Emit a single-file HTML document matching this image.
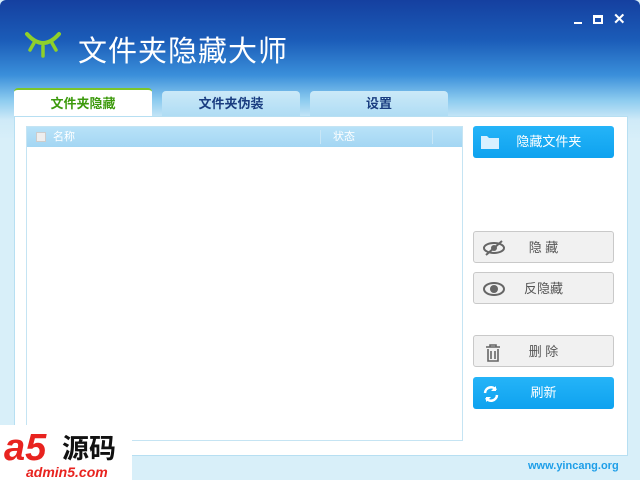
<!DOCTYPE html>
<html><head><meta charset="utf-8"><style>
*{margin:0;padding:0;box-sizing:border-box}
body{width:640px;height:480px;overflow:hidden;font-family:"Liberation Sans","Noto Sans CJK SC",sans-serif;background:#d8eff9;position:relative}
.win{position:absolute;left:0;top:0;width:640px;height:480px;border-radius:6px 6px 0 0;background:linear-gradient(180deg,#1540a0 0px,#1b5cb8 40px,#3a8fda 75px,#8ccbef 100px,#cfeaf8 120px,#d8eff9 140px);}
.title{position:absolute;left:78px;top:28px;color:#fff;font-size:29px;letter-spacing:1px;font-family:"Noto Sans CJK SC",sans-serif;}
.tab{position:absolute;height:26px;font-size:13px;font-weight:bold;text-align:center;line-height:26px;border-radius:4px 4px 0 0;color:#1a3d80}
.panel{position:absolute;left:14px;top:116px;width:614px;height:340px;background:#fff;border:1px solid #b7dff2}
.list{position:absolute;left:26px;top:126px;width:437px;height:315px;border:1px solid #c5e4f3;background:#fff}
.hdr{height:20px;background:linear-gradient(#b8e2f8,#a3d6f3);color:#fff;font-size:11px;line-height:20px;position:relative}
.btn{position:absolute;left:473px;width:141px;height:32px;border-radius:3px;font-size:13px;line-height:32px;text-align:center}
.blue{background:linear-gradient(#25b4f8,#0ea2ef);color:#fff}
.grey{background:#f1f1f1;border:1px solid #c9c9c9;color:#555}
.ic{position:absolute;left:8px;top:7px}
</style></head><body>
<div class="win"></div>
<svg style="position:absolute;left:24px;top:30px" width="38" height="30"><path d="M3 4 Q19 22 35 4" stroke="#8fd02a" stroke-width="4" fill="none" stroke-linecap="round"/><path d="M19 16 V26 M10 13 L6 20 M28 13 L32 20" stroke="#8fd02a" stroke-width="3.5" stroke-linecap="round"/></svg>
<div class="title">文件夹隐藏大师</div>
<div style="position:absolute;left:574px;top:22px;width:8px;height:2px;background:#fff"></div>
<div style="position:absolute;left:593px;top:15px;width:10px;height:9px;border:2px solid #fff;border-top-width:3px"></div>
<div style="position:absolute;left:613px;top:10px;color:#fff;font-size:15px;font-weight:bold">✕</div>
<div class="tab" style="left:14px;top:88px;width:138px;height:29px;background:#fff;border-top:2px solid #7cc62a;color:#3c9a0c;line-height:27px">文件夹隐藏</div>
<div class="tab" style="left:162px;top:91px;width:138px;background:linear-gradient(#cbe9f8,#aedcf4)">文件夹伪装</div>
<div class="tab" style="left:310px;top:91px;width:138px;background:linear-gradient(#cbe9f8,#aedcf4)">设置</div>
<div class="panel"></div>
<div class="list"><div class="hdr"><span style="position:absolute;left:9px;top:5px;width:10px;height:10px;background:#eee;border:1px solid #ccc"></span><span style="position:absolute;left:26px">名称</span><span style="position:absolute;left:293px;top:3px;width:1px;height:14px;background:#c8e6f6"></span><span style="position:absolute;left:306px">状态</span><span style="position:absolute;left:405px;top:3px;width:1px;height:14px;background:#c8e6f6"></span></div></div>
<div class="btn blue" style="top:126px"><svg class="ic" width="20" height="18" style="left:7px"><path d="M1 3h6l2 2h10v11H1z" fill="#d8f0ff"/></svg>&nbsp;&nbsp;&nbsp;隐藏文件夹</div>
<div class="btn grey" style="top:231px"><svg class="ic" width="24" height="18"><ellipse cx="12" cy="9" rx="10" ry="5" fill="none" stroke="#666" stroke-width="2"/><circle cx="12" cy="9" r="3" fill="#666"/><path d="M4 16 L20 2" stroke="#666" stroke-width="2"/></svg>隐 藏</div>
<div class="btn grey" style="top:272px"><svg class="ic" width="24" height="18"><ellipse cx="12" cy="9" rx="10" ry="6" fill="none" stroke="#666" stroke-width="2"/><circle cx="12" cy="9" r="4" fill="#666"/></svg>反隐藏</div>
<div class="btn grey" style="top:335px"><svg class="ic" width="18" height="20" style="left:10px"><path d="M2 4h14M6 4V2h6v2M4 6v12h10V6M7 8v8M11 8v8" stroke="#666" stroke-width="1.6" fill="none"/></svg>删 除</div>
<div class="btn blue" style="top:377px"><svg class="ic" width="20" height="20"><path d="M4 9a6 6 0 0 1 11-3M16 11a6 6 0 0 1-11 3" stroke="#fff" stroke-width="2.5" fill="none"/><path d="M15 2v5h-5zM5 18v-5h5z" fill="#fff"/></svg>刷新</div>
<div style="position:absolute;left:528px;top:460px;color:#1e9ee8;font-size:11px;font-weight:bold">www.yincang.org</div>
<div style="position:absolute;left:0;top:425px;width:132px;height:55px;background:#fff"></div>
<div style="position:absolute;left:4px;top:428px;color:#e8231f;font-size:38px;font-weight:bold;font-style:italic;line-height:40px">a5</div>
<div style="position:absolute;left:62px;top:432px;color:#111;font-size:27px;font-weight:bold;line-height:30px;font-family:'Noto Sans CJK SC',sans-serif">源码</div>
<div style="position:absolute;left:26px;top:464px;color:#e8231f;font-size:14px;font-weight:bold;font-style:italic">admin5.com</div>
</body></html>
